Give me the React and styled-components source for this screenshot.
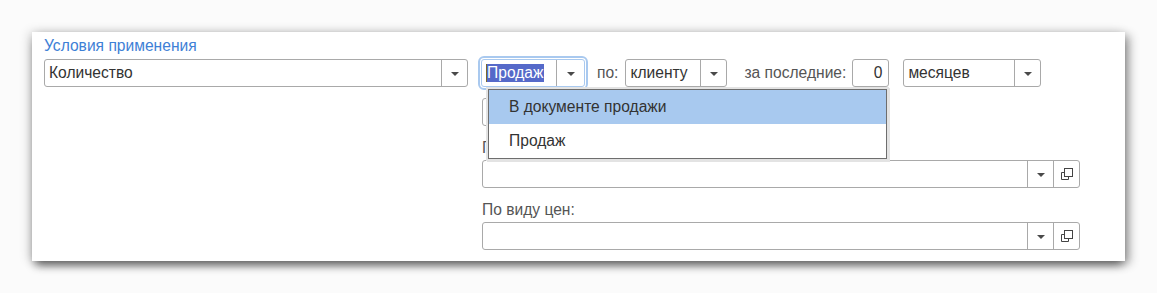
import React from "react";
import styled, { createGlobalStyle } from "styled-components";

const GlobalStyle = createGlobalStyle`
  html, body { margin: 0; padding: 0; background: #fbfbfb; }
  body { font-family: "Liberation Sans", Arial, sans-serif; font-size: 15.6px; color: #333; }
  * { box-sizing: border-box; }
`;

const Page = styled.div`
  padding: 32px 32px 0 32px;
  width: 1157px;
  height: 293px;
`;

const Panel = styled.div`
  position: relative;
  width: 1093px;
  height: 229px;
  background: #fff;
  padding: 4px 12px 0 12px;
  box-shadow: 0 7px 9px -3px rgba(0, 0, 0, 0.45), 5px 3px 9px rgba(0, 0, 0, 0.3),
    -3px 0 10px rgba(0, 0, 0, 0.16);
  display: flex;
  flex-direction: column;
`;

const Title = styled.div`
  height: 20px;
  line-height: 20px;
  color: #3e80d6;
`;

const Row = styled.div`
  display: flex;
  align-items: center;
  height: 28px;
  margin-top: 3px;
`;

const Field = styled.div`
  display: flex;
  align-items: stretch;
  width: ${(p) => p.$w}px;
  height: 28px;
  margin-left: ${(p) => p.$ml || 0}px;
  border: 1px solid ${(p) => (p.$focused ? "#a9c9ef" : "#a9a9a9")};
  outline: ${(p) => (p.$focused ? "2px solid #a9c9ef" : "none")};
  outline-offset: 1px;
  border-radius: 3px;
  background: #fff;
  flex-shrink: 0;
`;

const Value = styled.div`
  flex: 1;
  display: flex;
  align-items: center;
  justify-content: ${(p) => (p.$right ? "flex-end" : "flex-start")};
  padding: 0 ${(p) => (p.$right ? 6 : 0)}px 0 ${(p) => (p.$right ? 0 : 4)}px;
  line-height: 26px;
  color: #333;
  white-space: nowrap;
  overflow: hidden;
`;

const Selected = styled.span`
  position: relative;
  background: #5569c9;
  color: #fff;
  line-height: 18px;
  padding: 0 1px;
  &::before {
    content: "";
    position: absolute;
    left: 0;
    top: 0;
    bottom: 0;
    width: 1px;
    background: #7a6a2a;
  }
`;

const Btn = styled.div`
  width: ${(p) => p.$w || 26}px;
  border-left: 1px solid #a9a9a9;
  display: flex;
  align-items: center;
  justify-content: center;
  flex-shrink: 0;
`;

const Arrow = styled.span`
  width: 0;
  height: 0;
  border-left: 4px solid transparent;
  border-right: 4px solid transparent;
  border-top: 4px solid #4a4a4a;
  margin-top: 1px;
`;

const Label = styled.span`
  margin-left: ${(p) => p.$ml || 0}px;
  color: #555;
  white-space: nowrap;
  flex-shrink: 0;
`;

const Column = styled.div`
  margin-left: 438px;
  display: flex;
  flex-direction: column;
`;

const ColumnField = styled(Field)`
  margin-top: ${(p) => p.$mt || 0}px;
`;

const FieldLabel = styled.div`
  margin-top: 12px;
  margin-bottom: 2px;
  height: 20px;
  line-height: 20px;
  color: #555;
`;

const Popup = styled.div`
  position: absolute;
  left: 456px;
  top: 57px;
  width: 399px;
  background: #fff;
  border: 1px solid #6e6e6e;
  box-shadow: 0 0 0 2px #e3e3e3, 1px 1px 0 2px #e3e3e3;
  display: flex;
  flex-direction: column;
  z-index: 5;
`;

const Item = styled.div`
  height: 34px;
  line-height: 34px;
  padding-left: 20px;
  color: #333;
  background: ${(p) => (p.$active ? "#a8c9ef" : "#fff")};
`;

const CopyIcon = () => (
  <svg width="14" height="14" viewBox="0 0 14 14" fill="none" stroke="#444" strokeWidth="1">
    <rect x="4.5" y="1.5" width="8" height="8" />
    <path d="M4 5.5 H1.5 V12.5 H8.5 V10" />
  </svg>
);

const Select = ({ w, ml, value }) => (
  <Field $w={w} $ml={ml}>
    <Value>{value}</Value>
    <Btn>
      <Arrow />
    </Btn>
  </Field>
);

const RefSelect = ({ w, mt }) => (
  <ColumnField $w={w} $mt={mt}>
    <Value />
    <Btn>
      <Arrow />
    </Btn>
    <Btn>
      <CopyIcon />
    </Btn>
  </ColumnField>
);

export default function App() {
  return (
    <>
      <GlobalStyle />
      <Page>
        <Panel>
          <Title>Условия применения</Title>
          <Row>
            <Select w={424} value="Количество" />
            <Field $w={104} $ml={13} $focused>
              <Value>
                <Selected>Продаж</Selected>
              </Value>
              <Btn $w={28}>
                <Arrow />
              </Btn>
            </Field>
            <Label $ml={12}>по:</Label>
            <Select w={102} ml={7} value="клиенту" />
            <Label $ml={17}>за последние:</Label>
            <Field $w={37} $ml={6}>
              <Value $right>0</Value>
            </Field>
            <Select w={138} ml={14} value="месяцев" />
          </Row>
          <Column>
            <ColumnField $w={380} $mt={11}>
              <Value />
            </ColumnField>
            <FieldLabel>По соглашению:</FieldLabel>
            <RefSelect w={598} />
            <FieldLabel>По виду цен:</FieldLabel>
            <RefSelect w={598} />
          </Column>
          <Popup>
            <Item $active>В документе продажи</Item>
            <Item>Продаж</Item>
          </Popup>
        </Panel>
      </Page>
    </>
  );
}
